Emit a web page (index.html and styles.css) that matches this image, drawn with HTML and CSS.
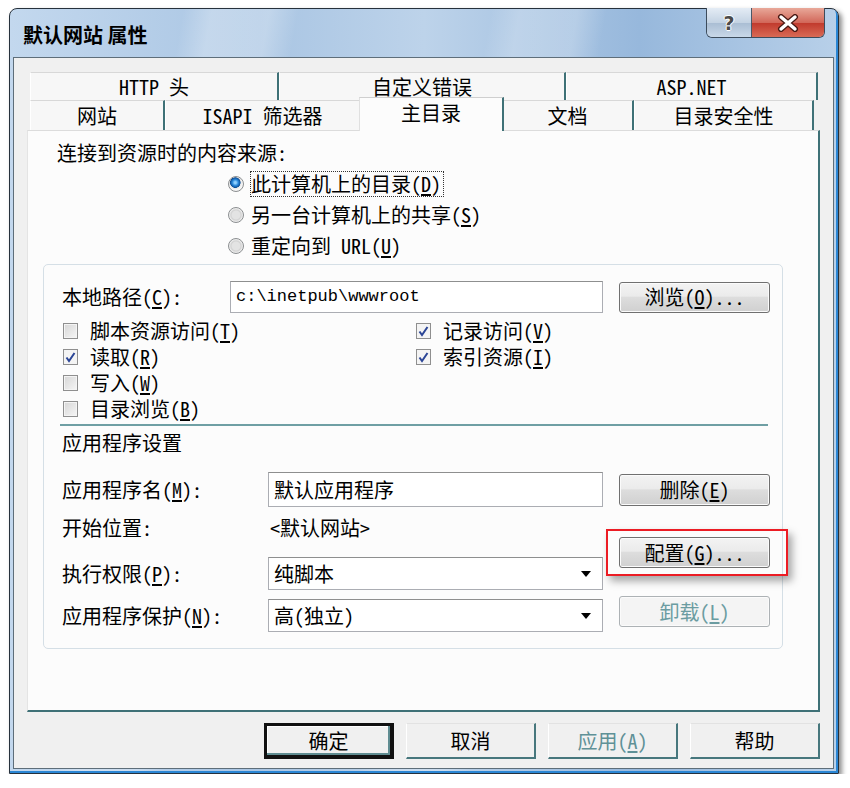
FILE: index.html
```html
<!DOCTYPE html>
<html lang="zh-CN">
<head>
    <meta charset="UTF-8">
    <title>默认网站 属性</title>
    <link rel="stylesheet" href="styles.css">
</head>
<body>
    <div class="window">
        <div class="titlebar">
            <span class="title">默认网站 属性</span>
            <div class="caption-btns">
                <span class="cap-help">?</span>
                <span class="cap-close">
                    <svg width="24" height="18" viewBox="0 0 24 18">
                        <path d="M5 3 L19 15 M19 3 L5 15" stroke="#4a1a14" stroke-width="6" stroke-linecap="round"/>
                        <path d="M5 3 L19 15 M19 3 L5 15" stroke="#fff" stroke-width="3.4" stroke-linecap="round"/>
                    </svg>
                </span>
            </div>
        </div>

        <div class="client">
            <div class="tabs">
                <div class="tab-row back">
                    <div class="tab" style="width: 249px">HTTP 头</div>
                    <div class="tab" style="width: 287px">自定义错误</div>
                    <div class="tab" style="width: 252px">ASP.NET</div>
                </div>
                <div class="tab-row front">
                    <div class="tab" style="width: 135px">网站</div>
                    <div class="tab" style="width: 196px">ISAPI 筛选器</div>
                    <div class="tab selected" style="width: 145px">主目录</div>
                    <div class="tab" style="width: 132px">文档</div>
                    <div class="tab" style="width: 180px">目录安全性</div>
                </div>
            </div>

            <div class="panel">
                <div class="source-label">连接到资源时的内容来源:</div>
                <div class="radios">
                    <div class="radio-row">
                        <span class="radio checked"></span>
                        <span class="focus">此计算机上的目录(<u>D</u>)</span>
                    </div>
                    <div class="radio-row">
                        <span class="radio"></span>
                        <span>另一台计算机上的共享(<u>S</u>)</span>
                    </div>
                    <div class="radio-row">
                        <span class="radio"></span>
                        <span>重定向到 URL(<u>U</u>)</span>
                    </div>
                </div>

                <div class="group">
                    <div class="path-row">
                        <span class="path-label">本地路径(<u>C</u>):</span>
                        <div class="field path-field">c:\inetpub\wwwroot</div>
                        <button class="btn">浏览(<u>O</u>)...</button>
                    </div>

                    <div class="checks">
                        <div class="check"><span class="box"></span><span>脚本资源访问(<u>T</u>)</span></div>
                        <div class="check"><span class="box on"><svg width="13" height="13" viewBox="0 0 13 13"><path d="M2.5 6.5 L5 10 L10.5 2" fill="none" stroke="#2b4596" stroke-width="2"/></svg></span><span>记录访问(<u>V</u>)</span></div>
                        <div class="check"><span class="box on"><svg width="13" height="13" viewBox="0 0 13 13"><path d="M2.5 6.5 L5 10 L10.5 2" fill="none" stroke="#2b4596" stroke-width="2"/></svg></span><span>读取(<u>R</u>)</span></div>
                        <div class="check"><span class="box on"><svg width="13" height="13" viewBox="0 0 13 13"><path d="M2.5 6.5 L5 10 L10.5 2" fill="none" stroke="#2b4596" stroke-width="2"/></svg></span><span>索引资源(<u>I</u>)</span></div>
                        <div class="check"><span class="box"></span><span>写入(<u>W</u>)</span></div>
                        <span></span>
                        <div class="check"><span class="box"></span><span>目录浏览(<u>B</u>)</span></div>
                    </div>

                    <div class="separator"></div>
                    <div class="section-title">应用程序设置</div>

                    <div class="app">
                        <div class="app-fields">
                            <div class="app-row name-row">
                                <span>应用程序名(<u>M</u>):</span>
                                <div class="field">默认应用程序</div>
                            </div>
                            <div class="app-row start-row">
                                <span>开始位置:</span>
                                <span class="start-value">&lt;默认网站&gt;</span>
                            </div>
                            <div class="app-row exec-row">
                                <span>执行权限(<u>P</u>):</span>
                                <div class="field select">纯脚本<span class="arrow"></span></div>
                            </div>
                            <div class="app-row protect-row">
                                <span>应用程序保护(<u>N</u>):</span>
                                <div class="field select">高(独立)<span class="arrow"></span></div>
                            </div>
                        </div>
                        <div class="app-buttons">
                            <button class="btn btn-remove">删除(<u>E</u>)</button>
                            <div class="highlight">
                                <button class="btn btn-config">配置(<u>G</u>)...</button>
                            </div>
                            <button class="btn btn-unload" disabled>卸载(<u>L</u>)</button>
                        </div>
                    </div>
                </div>
            </div>

            <div class="dialog-buttons">
                <button class="dbtn default">确定</button>
                <button class="dbtn">取消</button>
                <button class="dbtn disabled">应用(<u>A</u>)</button>
                <button class="dbtn">帮助</button>
            </div>
        </div>
    </div>
</body>
</html>
```

FILE: styles.css
```css
* {
    box-sizing: border-box;
}

body {
    margin: 0;
    background: #fff;
    font-family: "Noto Sans Mono CJK SC", "Noto Sans CJK SC", sans-serif;
    font-size: 20px;
    line-height: 24px;
    color: #000;
}

u {
    text-underline-offset: 2px;
}

/* window frame */
.window {
    width: 830px;
    height: 766px;
    margin: 8px 0 0 9px;
    padding: 0 4px 4px 3px;
    display: flex;
    flex-direction: column;
    border: 1px solid #26313c;
    border-radius: 8px 8px 0 0;
    background:
        linear-gradient(100deg, transparent 0 18%, rgba(255,255,255,.28) 21% 27%, transparent 30% 50%, rgba(255,255,255,.22) 53% 59%, transparent 62%),
        linear-gradient(90deg, #c3d8ee 0%, #a9c5e3 30%, #bdd3ea 50%, #97b8dc 76%, #b8d0e9 100%);
    box-shadow: 3px 3px 5px rgba(0,0,0,.45), inset -2px -2px 0 #2a86d4;
}

.titlebar {
    height: 48px;
    display: flex;
    justify-content: space-between;
    align-items: flex-start;
    padding-left: 10px;
}

.title {
    margin-top: 14px;
    font-weight: bold;
    font-size: 20px;
    font-family: "Noto Sans CJK SC", sans-serif;
}

.caption-btns {
    display: flex;
    margin-right: 9px;
    margin-top: -1px;
    border: 1px solid #3d4c5c;
    border-top: none;
    border-radius: 0 0 6px 6px;
    overflow: hidden;
}

.cap-help {
    width: 45px;
    height: 29px;
    display: flex;
    align-items: center;
    justify-content: center;
    border-right: 1px solid #4a5868;
    background: linear-gradient(#e4ecf5, #c4d3e3 50%, #a9bdd3 51%, #c9d8e8);
    font-family: "DejaVu Sans", sans-serif;
    font-weight: bold;
    font-size: 19px;
    color: #4a4a4a;
    text-shadow: 0 0 1px #fff, 1px 0 0 #fff, -1px 0 0 #fff, 0 1px 0 #fff, 0 -1px 0 #fff;
}

.cap-close {
    width: 72px;
    height: 29px;
    display: flex;
    align-items: center;
    justify-content: center;
    background: linear-gradient(#e8a899, #d2685a 50%, #c0392c 51%, #d96a55);
}

.client {
    flex: 1;
    padding: 14px 13px 0 13px;
    background: #f0f0f0;
    border: 1px solid #5e6e7a;
}

/* tabs */
.tabs {
    margin-left: 3px;
}

.tab-row {
    display: flex;
}

.tab-row.back {
    height: 28px;
}

.tab-row.front {
    height: 30px;
}

.tab {
    display: flex;
    align-items: center;
    justify-content: center;
    background: #f7f7f7;
    border-top: 1px solid #d8d8d8;
    border-left: 1px solid #fff;
    border-right: 2px solid #3f7177;
}

.tab.selected {
    position: relative;
    z-index: 1;
    margin: -3px -2px -1px -2px;
    padding-bottom: 4px;
    background: #fcfcfc;
    border-top: 1px solid #cfcfcf;
    border-left: 1px solid #e0e0e0;
}

.panel {
    height: 582px;
    padding-left: 15px;
    background: #fcfcfc;
    border-top: 1px solid #dcdcdc;
    border-left: 1px solid #e4e4e4;
    border-right: 2px solid #3f7177;
    border-bottom: 2px solid #3f7177;
}

.source-label {
    margin: 10px 0 0 14px;
}

.radios {
    margin: 3px 0 0 185px;
}

.radio-row {
    height: 31px;
    display: flex;
    align-items: center;
    gap: 7px;
}

.radio {
    width: 16px;
    height: 16px;
    border-radius: 50%;
    border: 1px solid #8b8e90;
    background: radial-gradient(circle, #e3e3e3 0 4px, #d2d2d2 5px, #f4f4f4 7px);
}

.radio.checked {
    background: radial-gradient(circle at 45% 40%, #8fd0ff 0 1px, #2a88da 3px, #0d4f98 5px, #e6e6e6 5.5px, #f6f6f6 7px);
}

.focus {
    outline: 1px dotted #333;
    outline-offset: 0;
    padding: 0 2px 0 0;
}

/* group box */
.group {
    width: 740px;
    height: 385px;
    margin-top: 3px;
    padding: 16px 12px 0 18px;
    border: 1px solid #d5dfe6;
    border-radius: 5px;
}

.path-row {
    display: flex;
    align-items: center;
    height: 32px;
}

.path-label {
    width: 168px;
}

.field {
    height: 32px;
    display: flex;
    align-items: center;
    padding-left: 5px;
    background: #fff;
    border: 1px solid #abadb3;
    border-top-color: #8e8f8f;
}

.path-field {
    width: 373px;
    margin-right: 16px;
    font-family: "Liberation Mono", monospace;
    font-size: 17px;
}

.btn {
    width: 151px;
    height: 31px;
    padding: 0;
    font: inherit;
    color: #000;
    border: 1px solid #707070;
    border-radius: 3px;
    background: linear-gradient(#f3f3f3, #ebebeb 45%, #dddddd 50%, #d0d0d0);
    box-shadow: inset 0 0 0 1px #fbfbfb;
}

.btn:disabled {
    color: #6b9ca1;
    border-color: #adb2b5;
    background: #f4f4f4;
}

.checks {
    display: grid;
    grid-template-columns: 353px auto;
    grid-auto-rows: 26px;
    margin: 5px 0 0 1px;
}

.check {
    display: flex;
    align-items: center;
    gap: 12px;
}

.box {
    flex: none;
    width: 15px;
    height: 16px;
    display: flex;
    align-items: center;
    justify-content: center;
    border: 1px solid #8f8f8f;
    background: linear-gradient(135deg, #d6d6d6, #f6f6f6);
    box-shadow: inset 0 0 0 1px #f4f4f4;
}

.box.on {
    background: #f4f4f4;
}

.separator {
    height: 2px;
    margin: 2px 2px 0 -2px;
    background: #6f9fa4;
}

.section-title {
    margin-top: 5px;
}

.app {
    display: flex;
    gap: 16px;
    margin-top: 17px;
}

.app-fields {
    width: 541px;
}

.app-row {
    display: grid;
    grid-template-columns: 206px 335px;
    align-items: center;
}

.name-row {
    height: 35px;
}

.name-row .field {
    height: 35px;
}

.start-row {
    height: 42px;
}

.start-value {
    padding-left: 2px;
}

.exec-row {
    height: 33px;
    margin-top: 8px;
}

.protect-row {
    height: 33px;
    margin-top: 9px;
}

.select {
    height: 33px;
    justify-content: space-between;
    padding-right: 11px;
}

.arrow {
    width: 0;
    height: 0;
    border-left: 5px solid transparent;
    border-right: 5px solid transparent;
    border-top: 6px solid #000;
}

.app-buttons {
    display: flex;
    flex-direction: column;
}

.btn-remove {
    height: 32px;
    margin-top: 2px;
}

.highlight {
    position: relative;
    margin-top: 31px;
}

.highlight::after {
    content: "";
    position: absolute;
    inset: -8px -18px -8px -13px;
    border: 2px solid #ec1c24;
    box-shadow: 4px 5px 8px rgba(0,0,0,.35);
}

.btn-config {
    display: block;
}

.btn-unload {
    margin-top: 28px;
}

/* dialog buttons */
.dialog-buttons {
    display: flex;
    justify-content: flex-end;
    gap: 12px;
    margin-top: 11px;
}

.dbtn {
    width: 130px;
    height: 36px;
    padding: 0;
    font: inherit;
    color: #000;
    background: #f0f0f0;
    border-top: 1px solid #e2e2e2;
    border-left: 1px solid #fff;
    border-right: 2px solid #47777d;
    border-bottom: 2px solid #47777d;
}

.dbtn.default {
    border: 3px solid #111;
    border-right-width: 4px;
    border-bottom-width: 4px;
    box-shadow: inset -2px -2px 0 #5f8c91, inset 1px 1px 0 #fff;
}

.dbtn.disabled {
    color: #5f9197;
}
```
